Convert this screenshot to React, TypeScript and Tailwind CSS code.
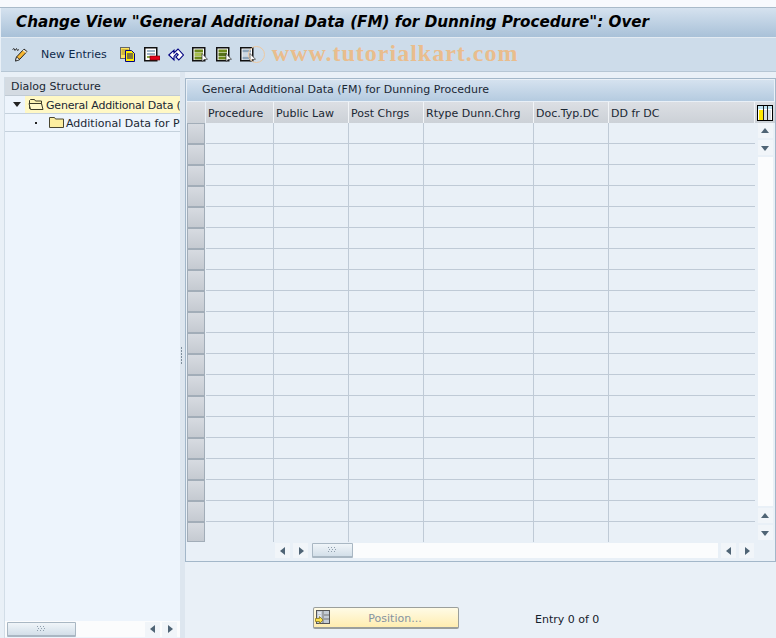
const columns = [
  { label: 'Procedure', width: 'w-[68px]' },
  { label: 'Public Law', width: 'w-[75px]' },
  { label: 'Post Chrgs', width: 'w-[75px]' },
  { label: 'Rtype Dunn.Chrg', width: 'w-[110px]' },
  { label: 'Doc.Typ.DC', width: 'w-[75px]' },
  { label: 'DD fr DC', width: 'flex-1' },
];

const rows = Array.from({ length: 20 }, (_, i) => i);

const Arrow = ({ dir }: { dir: 'up' | 'down' | 'left' | 'right' }) => {
  const points = {
    up: '1,7 5,2 9,7',
    down: '1,3 9,3 5,8',
    left: '7,1 7,9 2,5',
    right: '3,1 3,9 8,5',
  }[dir];
  return (
    <svg width="10" height="10" viewBox="0 0 10 10">
      <polygon points={points} fill="#4f6475" />
    </svg>
  );
};

const ScrollBtn = ({ dir }: { dir: 'up' | 'down' | 'left' | 'right' }) => (
  <div className="w-[15px] h-[15px] bg-[#f1f5f9] flex items-center justify-center shrink-0">
    <Arrow dir={dir} />
  </div>
);

const Grip = () => (
  <svg width="9" height="6" viewBox="0 0 9 6">
    <g fill="#8f9fad">
      <rect x="0" y="0" width="1" height="1" />
      <rect x="3" y="0" width="1" height="1" />
      <rect x="6" y="0" width="1" height="1" />
      <rect x="1" y="2" width="1" height="1" />
      <rect x="4" y="2" width="1" height="1" />
      <rect x="7" y="2" width="1" height="1" />
      <rect x="0" y="4" width="1" height="1" />
      <rect x="3" y="4" width="1" height="1" />
      <rect x="6" y="4" width="1" height="1" />
    </g>
  </svg>
);

const Thumb = ({ width }: { width: string }) => (
  <div className={`${width} h-[15px] shrink-0 flex items-center justify-center border border-[#a9b7c3] border-b-2 rounded-[1px] bg-gradient-to-b from-[#f0f5f9] to-[#d3dfe9]`}>
    <Grip />
  </div>
);

const FolderOpen = () => (
  <svg width="16" height="13" viewBox="0 0 16 13" className="shrink-0">
    <path d="M1.5 10.5V2.5l1-1h4l1 1.5h6v7z" fill="#fdf3b4" stroke="#3b3a28" />
    <path d="M2.5 11.5L1 5.5h12.5l1.5 6z" fill="#fff7c8" stroke="#3b3a28" />
  </svg>
);

const FolderClosed = () => (
  <svg width="15" height="13" viewBox="0 0 15 13" className="shrink-0">
    <path d="M.5 11.5V1.5h5l1 1.5h8v8.5z" fill="#fdeea0" stroke="#4a4630" />
  </svg>
);

const PencilIcon = () => (
  <svg width="17" height="15" viewBox="0 0 17 15">
    <path d="M.5 2.5l1.5-1 1 2 1.5-2 1 2 1.5-1" fill="none" stroke="#333" strokeWidth="1" />
    <path d="M3.5 14l1-4 7.5-8 3 2.5-7.5 8z" fill="#f7b733" stroke="#222" strokeWidth="1" />
    <path d="M3.5 14l1-4 3.5 2.5z" fill="#fff" stroke="#222" strokeWidth=".8" />
    <path d="M11 3l3.5 2.5" stroke="#e8e8e8" strokeWidth="1.4" />
  </svg>
);

const CopyIcon = () => (
  <svg width="16" height="15" viewBox="0 0 16 15">
    <rect x=".5" y=".5" width="9" height="11" fill="#ffe45c" stroke="#666" />
    <path d="M1.5 3h7M1.5 5h7M1.5 7h7" stroke="#a08a20" />
    <path d="M5.5 3.5h6l3 3v8h-9z" fill="#ffee00" stroke="#000080" />
    <path d="M7 7h6M7 9h6M7 11h6" stroke="#000080" />
  </svg>
);

const DeleteIcon = () => (
  <svg width="16" height="15" viewBox="0 0 16 15">
    <rect x=".75" y=".75" width="12" height="13" fill="#fff" stroke="#111" strokeWidth="1.5" />
    <path d="M3 3h8v2H3z" fill="#9fb4c7" />
    <path d="M3 6h8v2H3z" fill="#9fb4c7" />
    <path d="M3 9h4v2H3z" fill="#88a648" />
    <rect x="6" y="9" width="10" height="4" fill="#e2001a" stroke="#6b0000" strokeWidth=".6" />
  </svg>
);

const UndoIcon = () => (
  <svg width="16" height="15" viewBox="0 0 16 15">
    <path d="M.8 8L6 3.2V6l4-4 5.4 6-4.6 5-3-3 2.4-2.2-1.4-1.4L6 9.5V13z" fill="#fff" stroke="#000080" strokeWidth="1.1" />
  </svg>
);

const SelectIcon = ({ shade }: { shade: 'green' | 'dark' | 'gray' }) => {
  const a = shade === 'gray' ? '#8fa6ba' : '#6f8a1c';
  const b = shade === 'dark' ? '#55701a' : shade === 'green' ? '#a8bf50' : '#cdd8e2';
  return (
    <svg width="16" height="16" viewBox="0 0 16 16">
      <rect x=".75" y=".75" width="12" height="13" fill="#fff" stroke="#111" strokeWidth="1.5" />
      <rect x="2.5" y="2.5" width="8.5" height="3" fill={a} />
      <rect x="2.5" y="6" width="8.5" height="3" fill={b} />
      <rect x="2.5" y="9.5" width="8.5" height="3" fill={a} />
      <path d="M10 6.5v8l2.2-2 3.3-.2z" fill="#fff" stroke="#333" strokeWidth=".7" />
    </svg>
  );
};

const ColumnsIcon = () => (
  <svg width="16" height="16" viewBox="0 0 16 16">
    <rect x=".5" y=".5" width="15" height="15" fill="#fff" stroke="#000" />
    <rect x="1" y="1" width="14" height="3" fill="#bfe3f2" />
    <rect x="2" y="5" width="4" height="10" fill="#ffe800" />
    <rect x="7" y="5" width="3" height="10" fill="#d8dfe5" />
    <rect x="11" y="5" width="3" height="10" fill="#d8dfe5" />
    <path d="M6.5 1v14M10.5 1v14" stroke="#222" />
  </svg>
);

const PositionIcon = () => (
  <svg width="15" height="15" viewBox="0 0 15 15">
    <rect x="1.5" y=".5" width="13" height="13" fill="#c4ccd6" stroke="#555" />
    <path d="M8 1v12M9 5h5M9 9h5" stroke="#777" />
    <path d="M3 3h3M3 6h3" stroke="#fff" />
    <path d="M.5 8.5h4v-2l3.5 3.5-3.5 3.5v-2h-4z" fill="#ffe24a" stroke="#8a7a20" strokeWidth=".8" />
  </svg>
);

export default function App() {
  return (
    <div className="w-[776px] h-[638px] overflow-hidden flex flex-col bg-[#e9f0f7] text-[11px] text-[#1a2733] font-['DejaVu_Sans',sans-serif]">
      <div className="h-[7px] bg-[#f7f9fd] border-b border-[#a9bac9] shrink-0 box-content" />
      <div className="h-[30px] shrink-0 flex items-center pl-[15px] ml-px bg-gradient-to-b from-[#d5e2ef] to-[#a9c1d8] border-b border-[#e3ebf2] text-[15.2px] font-bold italic text-black whitespace-nowrap overflow-hidden">
        Change View "General Additional Data (FM) for Dunning Procedure": Over
      </div>
      <div className="h-[34px] shrink-0 flex items-center ml-px bg-[#cddcea] border-b border-[#b6c6d4] relative">
        <div className="ml-[11px] w-[17px] flex"><PencilIcon /></div>
        <span className="ml-[12px] pt-[2px] text-[#0f2a4a]">New Entries</span>
        <div className="ml-[13px] flex items-center gap-[8px]">
          <CopyIcon />
          <DeleteIcon />
          <UndoIcon />
          <SelectIcon shade="green" />
          <SelectIcon shade="dark" />
          <SelectIcon shade="gray" />
        </div>
        <div className="ml-[-8px] w-[17px] h-[17px] rounded-full border border-[#eec9a0]" />
        <span className="ml-[7px] mb-[3px] font-['Liberation_Serif',serif] text-[24px] font-bold tracking-[1px] text-[#e9bd8d] leading-none">
          www.tutorialkart.com
        </span>
      </div>

      <div className="flex-1 flex min-h-0">
        {/* left tree */}
        <div className="w-[180px] shrink-0 pl-1 pt-[5px] flex">
          <div className="flex-1 flex flex-col border-l border-[#d2dde7] bg-[#edf4fc] min-w-0">
            <div className="h-[19px] shrink-0 flex items-center pl-[6px] pt-[2px] bg-[#d4dbe2] border-b border-[#c0cad4]">
              Dialog Structure
            </div>
            <div className="h-[18px] shrink-0 flex items-center border-b border-[#c5d1dc] overflow-hidden whitespace-nowrap">
              <svg width="8" height="5" viewBox="0 0 8 5" className="ml-[8px] shrink-0">
                <polygon points="0,0 8,0 4,5" fill="#222" />
              </svg>
              <div className="ml-[4px] pl-[3px] flex-1 h-full flex items-center bg-[#fff8c5] gap-[2px] overflow-hidden">
                <FolderOpen />
                <span className="pt-[3px] tracking-[-0.2px]">General Additional Data (</span>
              </div>
            </div>
            <div className="h-[18px] shrink-0 flex items-center border-b border-[#c5d1dc] overflow-hidden whitespace-nowrap">
              <div className="ml-[30px] w-[2px] h-[2px] bg-[#222] shrink-0" />
              <div className="ml-[12px] flex items-center gap-[2px]">
                <FolderClosed />
                <span className="pt-[3px]">Additional Data for P</span>
              </div>
            </div>
            <div className="flex-1" />
            <div className="h-[16px] shrink-0 flex items-center gap-[2px] pl-[2px] bg-[#fbfcfd] mb-px">
              <Thumb width="w-[69px]" />
              <div className="flex-1" />
              <ScrollBtn dir="left" />
              <ScrollBtn dir="right" />
              <div className="w-px" />
            </div>
          </div>
        </div>

        {/* sash */}
        <div className="w-[5px] shrink-0 bg-[#dde6ef] flex flex-col items-start pl-px justify-center gap-px">
          {[0, 1, 2, 3, 4, 5].map((i) => (
            <div key={i} className="w-px h-[2px] bg-[#7f8f9d]" />
          ))}
        </div>

        {/* right */}
        <div className="flex-1 flex flex-col min-w-0 pt-[6px]">
          <div className="h-[484px] shrink-0 border border-[#a3b7c9] pt-px flex flex-col">
            <div className="h-[21px] ml-px mr-px shrink-0 flex items-center pl-[15px] bg-gradient-to-b from-[#d5e2ef] to-[#b5cbe0]">
              General Additional Data (FM) for Dunning Procedure
            </div>
            <div className="h-[22px] shrink-0 flex items-stretch ml-px border-t border-[#e9f0f7] bg-gradient-to-b from-[#dcdfe4] to-[#ccd1d7]">
              <div className="w-[19px] shrink-0 border-r border-[#e9f0f7]" />
              <div className="flex-1 flex min-w-0">
                {columns.map((c) => (
                  <div key={c.label} className={`${c.width} shrink-0 flex items-center pl-[2px] pt-[3px] border-r border-[#f1f4f7] whitespace-nowrap`}>
                    {c.label}
                  </div>
                ))}
              </div>
              <div className="w-[20px] shrink-0 flex items-center justify-center">
                <ColumnsIcon />
              </div>
            </div>
            <div className="flex-1 flex min-h-0">
              <div className="flex-1 flex flex-col min-w-0">
                <div className="flex-1 flex flex-col min-h-0">
                  {rows.map((r) => (
                    <div key={r} className={`${r === 19 ? 'h-[20px]' : 'h-[21px]'} shrink-0 flex`}>
                      <div className="w-[18px] ml-px mr-px shrink-0 bg-gradient-to-b from-[#d7dbe1] to-[#c5cad1] border border-[#a2adb8]" />
                      <div className={`flex-1 flex min-w-0 ${r === 19 ? '' : 'border-b border-[#bfcad6]'}`}>
                        {columns.map((c) => (
                          <div key={c.label} className={`${c.width} shrink-0 border-r border-[#bfcad6] last:border-r-0`} />
                        ))}
                      </div>
                    </div>
                  ))}
                </div>
                <div className="h-[18px] shrink-0 flex items-start gap-[3px] pl-[89px] pr-px">
                  <ScrollBtn dir="left" />
                  <ScrollBtn dir="right" />
                  <div className="flex-1 h-[15px] bg-[#fbfcfd] flex items-stretch ml-px min-w-0">
                    <Thumb width="w-[41px]" />
                  </div>
                  <ScrollBtn dir="left" />
                  <ScrollBtn dir="right" />
                </div>
              </div>
              <div className="w-[20px] shrink-0 flex flex-col items-center gap-[2px] pb-[21px]">
                <ScrollBtn dir="up" />
                <ScrollBtn dir="down" />
                <div className="flex-1 w-[15px] bg-[#fbfcfd]" />
                <ScrollBtn dir="up" />
                <ScrollBtn dir="down" />
              </div>
            </div>
          </div>
          <div className="flex-1 flex items-start pt-[45px] pl-[128px]">
            <div className="w-[146px] h-[22px] flex items-center border border-[#9b9f9c] border-b-2 rounded-[2px] bg-gradient-to-b from-[#fffbe6] to-[#ffedb0] pl-px">
              <PositionIcon />
              <span className="flex-1 text-center text-[#8593a1] pl-[2px] pt-[3px]">Position...</span>
            </div>
            <span className="ml-[76px] mt-[5px] text-[#15202b]">Entry 0 of 0</span>
          </div>
        </div>
      </div>
    </div>
  );
}
